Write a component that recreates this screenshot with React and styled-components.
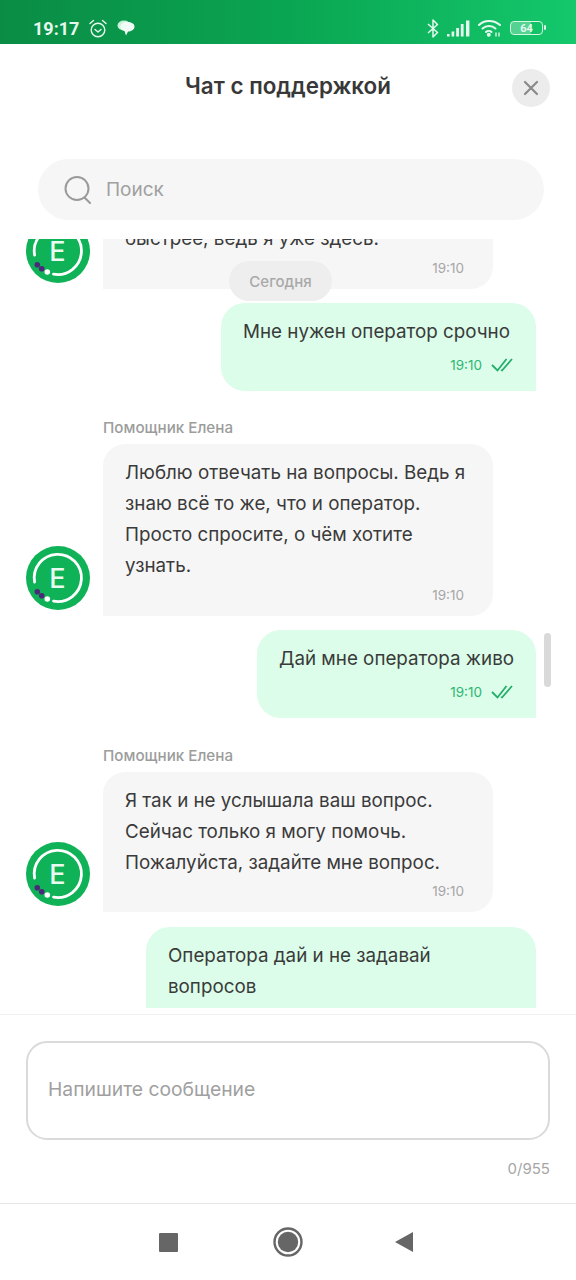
import React from 'react'
import styled, {createGlobalStyle} from 'styled-components'

const GlobalStyle = createGlobalStyle`
html, body {
  margin: 0;
  padding: 0;
  background: #fff;
}
* {
  box-sizing: border-box;
}
`
const Page = styled.div`
width: 576px;
height: 1280px;
position: relative;
display: flex;
flex-direction: column;
overflow: hidden;
background: #fff;
font-family: Inter, "Noto Sans", sans-serif;
color: #3a3a3a;
`
const StatusBar = styled.div`
height: 44px;
flex: none;
display: flex;
align-items: center;
padding: 12px 33px 0 33px;
background: linear-gradient(90deg, #0a8c45 0%, #0aa552 50%, #14c86c 100%);
color: #e6f9ee;
`
const Clock = styled.span`
font-family: Roboto, sans-serif;
font-weight: 700;
font-size: 18px;
`
const StatusLeft = styled.div`
display: flex;
align-items: center;
gap: 10px;
flex: 1;
`
const StatusRight = styled.div`
display: flex;
align-items: center;
gap: 8px;
`
const Battery = styled.div`
width: 33px;
height: 14px;
margin-left: 1px;
border: 1.5px solid #d8f6e4;
border-radius: 4px;
display: flex;
align-items: center;
justify-content: center;
position: relative;
background: linear-gradient(90deg, rgba(255,255,255,0.28) 64%, transparent 64%);
font-family: Roboto, sans-serif;
font-size: 11px;
font-weight: 700;
color: #e6f9ee;
&::after {
  content: '';
  position: absolute;
  right: -4px;
  top: 3px;
  width: 2px;
  height: 5px;
  background: #d8f6e4;
  border-radius: 1px;
}
`
const Header = styled.div`
height: 115px;
flex: none;
position: relative;
display: flex;
justify-content: center;
padding-top: 27px;
`
const Title = styled.h1`
margin: 0;
font-size: 22.4px;
line-height: 30px;
font-weight: 600;
color: #383838;
`
const CloseBtn = styled.div`
position: absolute;
right: 26px;
top: 25px;
width: 38px;
height: 38px;
border-radius: 50%;
background: #ececec;
display: flex;
align-items: center;
justify-content: center;
`
const SearchBar = styled.div`
height: 61px;
flex: none;
margin: 0 32px 19px 38px;
border-radius: 31px;
background: #f6f6f6;
display: flex;
align-items: center;
gap: 14px;
padding-left: 26px;
font-size: 19px;
color: #a0a0a0;
`
const Messages = styled.div`
height: 769px;
flex: none;
overflow: hidden;
position: relative;
padding: 0 40px 0 26px;
display: flex;
flex-direction: column;
`
const Row = styled.div`
display: flex;
align-items: flex-end;
gap: 13px;
flex: none;
margin-top: ${p => p.$top}px;
`
const AvatarBox = styled.div`
width: 64px;
height: 64px;
flex: none;
margin-bottom: 6px;
`
const Column = styled.div`
display: flex;
flex-direction: column;
`
const Sender = styled.div`
font-size: 15.2px;
line-height: 20px;
font-weight: 500;
color: #9c9c9c;
margin-bottom: 6px;
`
const InBubble = styled.div`
width: 390px;
background: #f6f6f6;
border-radius: 22px 22px 22px 0;
padding: 13px 29px 11px 22px;
`
const OutBubble = styled.div`
align-self: flex-end;
flex: none;
margin-top: ${p => p.$top}px;
background: #dbfde9;
border-radius: 24px 24px 0 24px;
padding: 13px 23px 16px 22px;
max-width: 390px;
width: ${p => p.$width}px;
`
const Text = styled.div`
font-size: 18.8px;
line-height: 31px;
color: #3a3a3a;
white-space: pre;
`
const Meta = styled.div`
display: flex;
justify-content: flex-end;
align-items: center;
gap: 9px;
height: 20px;
margin-top: ${p => p.$top}px;
font-size: 13.5px;
color: ${p => p.$out ? '#2fb673' : '#a6a6a6'};
`
const DateChip = styled.div`
position: absolute;
left: 229px;
top: 22px;
width: 103px;
height: 40px;
border-radius: 20px;
background: #eeeeee;
display: flex;
align-items: center;
justify-content: center;
font-size: 15px;
font-weight: 500;
color: #a8a8a8;
`
const ScrollThumb = styled.div`
position: absolute;
right: 25px;
top: 394px;
width: 7px;
height: 54px;
border-radius: 4px;
background: #d9d9d9;
`
const Composer = styled.div`
flex: none;
height: 189px;
margin-top: 6px;
border-top: 1px solid #f1f1f1;
padding: 26px 26px 0;
`
const InputBox = styled.div`
height: 99px;
border: 2px solid #dadada;
border-radius: 21px;
display: flex;
align-items: center;
padding: 0 0 4px 20px;
font-size: 19.3px;
color: #a0a0a0;
`
const Counter = styled.div`
text-align: right;
margin-top: 19px;
font-size: 15px;
line-height: 20px;
color: #a6a6a6;
`
const NavBar = styled.div`
flex: 1;
border-top: 1px solid #e6e6e6;
display: flex;
align-items: center;
justify-content: center;
gap: 80px;
`
const NavSlot = styled.div`
width: 40px;
height: 40px;
display: flex;
align-items: center;
justify-content: center;
`
const Square = styled.div`
width: 19px;
height: 19px;
border-radius: 1px;
background: #666;
`

const Logo = () => (
    <AvatarBox>
        <svg width="64" height="64" viewBox="0 0 64 64">
            <circle cx="32" cy="32" r="32" fill="#0fb257" />
            <path d="M27.5 55.1 A23.6 23.6 0 1 0 8.6 36" fill="none" stroke="#fff" strokeWidth="2.8" strokeLinecap="round" />
            <circle cx="21.3" cy="53" r="2.8" fill="#fff" />
            <circle cx="15.7" cy="49.7" r="2.8" fill="#4a2a78" />
            <circle cx="11.3" cy="45.7" r="2.8" fill="#4a2a78" />
            <text x="31.5" y="42" textAnchor="middle" fontFamily="Inter, sans-serif" fontSize="27" fontWeight="500" fill="#e9fbf0">E</text>
        </svg>
    </AvatarBox>
)

const DoubleCheck = () => (
    <svg width="22" height="14" viewBox="0 0 22 14" fill="none" stroke="#25ad6b" strokeWidth="1.8">
        <path d="M1 7 L6.5 12.5 L15.5 1" />
        <path d="M10 12 L11 12.5 L21 1" />
    </svg>
)

const Incoming = ({top, text, sender, metaTop = 4}) => (
    <Row $top={top}>
        <Logo />
        <Column>
            {sender && <Sender>{sender}</Sender>}
            <InBubble>
                <Text>{text}</Text>
                <Meta $top={metaTop}>19:10</Meta>
            </InBubble>
        </Column>
    </Row>
)

const Outgoing = ({top, width, text}) => (
    <OutBubble $top={top} $width={width}>
        <Text>{text}</Text>
        <Meta $out $top={8}>19:10 <DoubleCheck /></Meta>
    </OutBubble>
)

export default function App(){
    return(
        <Page>
            <GlobalStyle />
            <StatusBar>
                <StatusLeft>
                    <Clock>19:17</Clock>
                    <svg width="18" height="19" viewBox="0 0 18 19" fill="none" stroke="#e6f9ee" strokeWidth="1.4" strokeLinecap="round" strokeLinejoin="round">
                        <circle cx="9" cy="11" r="6.8" />
                        <path d="M6 10.5 L9 13 L12 10.5" />
                        <path d="M1 4.5 L4.5 1.5" />
                        <path d="M17 4.5 L13.5 1.5" />
                    </svg>
                    <svg width="18" height="16" viewBox="0 0 18 16" fill="#f2fcf6">
                        <ellipse cx="7" cy="5.5" rx="6.5" ry="5" fill="#c8f2d9" />
                        <path d="M9 2 C13 1.5 17.5 3 17.5 6.5 C17.5 10 14 11.5 11 11.5 L9 15.5 L7.5 11 C4.5 10.5 3 8.5 3.5 6 C4 3.5 6.5 2.2 9 2 Z" />
                    </svg>
                </StatusLeft>
                <StatusRight>
                    <svg width="12" height="19" viewBox="0 0 12 19" fill="none" stroke="#e6f9ee" strokeWidth="1.5" strokeLinejoin="round">
                        <path d="M1 5 L10.5 13.5 L6 18 L6 1 L10.5 5.5 L1 14" />
                    </svg>
                    <svg width="23" height="17" viewBox="0 0 23 17" fill="#e6f9ee">
                        <rect x="0" y="14" width="2.6" height="2.5" />
                        <rect x="4.6" y="11.5" width="2.6" height="5" />
                        <rect x="9.2" y="8" width="2.8" height="8.5" />
                        <rect x="13.8" y="4" width="2.8" height="12.5" />
                        <rect x="19" y="0.5" width="3.4" height="16" />
                    </svg>
                    <svg width="23" height="18" viewBox="0 0 23 18" fill="none" stroke="#e6f9ee" strokeWidth="2" strokeLinecap="round">
                        <path d="M1 6 C6 0.5 16 0.5 22 6" />
                        <path d="M4.5 9.5 C8 6 14 6 17.5 9.5" />
                        <path d="M8 13 C9.5 11.5 12 11.5 13.5 13" />
                        <circle cx="10.8" cy="15.8" r="1" fill="#e6f9ee" />
                        <path d="M18 14 V17 M21 14 V17" strokeWidth="1.3" />
                    </svg>
                    <Battery>64</Battery>
                </StatusRight>
            </StatusBar>
            <Header>
                <Title>Чат с поддержкой</Title>
                <CloseBtn>
                    <svg width="16" height="16" viewBox="0 0 16 16" stroke="#8a8a8a" strokeWidth="2.2" strokeLinecap="round">
                        <path d="M2 2 L14 14 M14 2 L2 14" />
                    </svg>
                </CloseBtn>
            </Header>
            <SearchBar>
                <svg width="28" height="28" viewBox="0 0 28 28" fill="none" stroke="#9a9a9a" strokeWidth="2" strokeLinecap="round">
                    <circle cx="13" cy="12.5" r="11.5" />
                    <path d="M20.5 21.5 L26 27" />
                </svg>
                Поиск
            </SearchBar>
            <Messages>
                <Incoming top={-29} text="быстрее, ведь я уже здесь." />
                <Outgoing top={14} width={315} text="Мне нужен оператор срочно" />
                <Incoming top={27} sender="Помощник Елена" text={'Люблю отвечать на вопросы. Ведь я\nзнаю всё то же, что и оператор.\nПросто спросите, о чём хотите\nузнать.'} />
                <Outgoing top={14} width={279} text="Дай мне оператора живо" />
                <Incoming top={28} metaTop={3} sender="Помощник Елена" text={'Я так и не услышала ваш вопрос.\nСейчас только я могу помочь.\nПожалуйста, задайте мне вопрос.'} />
                <Outgoing top={15} width={390} text={'Оператора дай и не задавай\nвопросов'} />
                <DateChip>Сегодня</DateChip>
                <ScrollThumb />
            </Messages>
            <Composer>
                <InputBox>Напишите сообщение</InputBox>
                <Counter>0/955</Counter>
            </Composer>
            <NavBar>
                <NavSlot><Square /></NavSlot>
                <NavSlot>
                    <svg width="30" height="30" viewBox="0 0 30 30">
                        <circle cx="15" cy="15" r="13.5" fill="none" stroke="#666" strokeWidth="2.4" />
                        <circle cx="15" cy="15" r="10.2" fill="#666" />
                    </svg>
                </NavSlot>
                <NavSlot>
                    <svg width="40" height="22" viewBox="0 0 40 22">
                        <path d="M7 11 L25 1 V21 Z" fill="#666" />
                    </svg>
                </NavSlot>
            </NavBar>
        </Page>
    )
}
